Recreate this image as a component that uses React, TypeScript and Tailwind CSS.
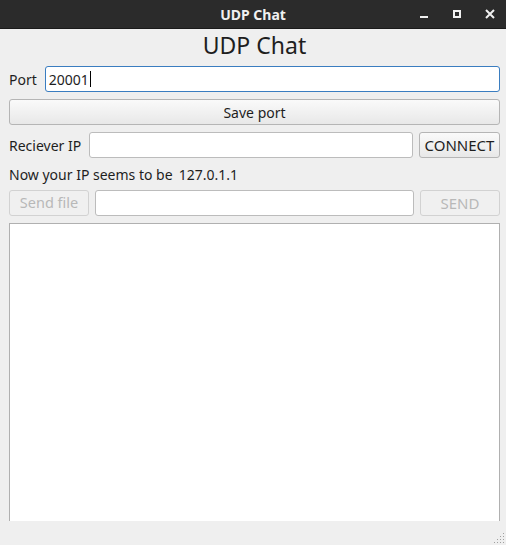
import React from "react";

const font = { fontFamily: '"Noto Sans", "Open Sans", sans-serif' };

function TitleBar() {
  return (
    <div className="relative flex h-[29px] items-center justify-center bg-[#2b2b2b] border-b border-[#1a1a1a]">
      <span className="text-[14px] font-bold text-[#f0f0f0]">UDP Chat</span>
      <div className="absolute right-0 top-0 flex h-full items-center">
        {/* minimize */}
        <div className="flex w-[33px] justify-center">
          <div className="mt-[6px] h-[2px] w-[8px] bg-[#f0f0f0]" />
        </div>
        {/* maximize */}
        <div className="flex w-[33px] justify-center">
          <div className="h-[8px] w-[8px] border-2 border-[#f0f0f0]" />
        </div>
        {/* close */}
        <div className="flex w-[33px] justify-center">
          <svg width="10" height="10" viewBox="0 0 10 10">
            <path d="M1 1L9 9M9 1L1 9" stroke="#f0f0f0" strokeWidth="2" />
          </svg>
        </div>
      </div>
    </div>
  );
}

function Button({ children, disabled, className = "" }: { children: React.ReactNode; disabled?: boolean; className?: string }) {
  return (
    <div
      className={`flex h-[26px] items-center justify-center rounded-[3px] border ${
        disabled
          ? "border-[#d2d2d2] bg-[#f0f0f0] text-[#b8b8b8]"
          : "border-[#b5b5b5] bg-gradient-to-b from-[#fafafa] to-[#e8e8e8] text-[#1e1e1e]"
      } ${className}`}
    >
      {children}
    </div>
  );
}

function Field({ children, focused, className = "" }: { children?: React.ReactNode; focused?: boolean; className?: string }) {
  return (
    <div
      className={`flex h-[26px] items-center rounded-[3px] border bg-white px-[3px] text-[14px] text-[#1e1e1e] ${
        focused ? "border-[#3a7dc0]" : "border-[#bcbcbc]"
      } ${className}`}
    >
      {children}
    </div>
  );
}

export default function App() {
  return (
    <div className="flex h-[545px] w-[506px] flex-col overflow-hidden bg-[#efefef] text-[#1e1e1e]" style={font}>
      <TitleBar />
      <div className="flex flex-1 flex-col gap-[7px] px-[9px] pt-[2px] pr-[6px]">
        <div className="text-center text-[23px] leading-[28px]">UDP Chat</div>

        <div className="flex items-center gap-[8px]">
          <span className="text-[14px]">Port</span>
          <Field focused className="flex-1">
            20001<span className="ml-[1px] h-[16px] w-[1px] bg-black" />
          </Field>
        </div>

        <Button className="text-[14px]">Save port</Button>

        <div className="flex items-center gap-[6px]">
          <span className="mr-[2px] text-[14px]">Reciever IP</span>
          <Field className="flex-1" />
          <Button className="w-[81px] text-[15px]">CONNECT</Button>
        </div>

        <div className="flex h-[18px] items-center gap-[6px] text-[14px]">
          <span>Now your IP seems to be</span>
          <span>127.0.1.1</span>
        </div>

        <div className="flex items-center gap-[6px]">
          <Button disabled className="w-[80px] text-[14.5px]">Send file</Button>
          <Field className="flex-1" />
          <Button disabled className="w-[80px] text-[15px]">SEND</Button>
        </div>

        <div className="flex-1 border border-b-0 border-[#b0b0b0] bg-white" />
      </div>
      <div className="relative h-[24px]">
        <div className="absolute bottom-[2px] right-[2px] grid grid-cols-4 gap-[2px]">
          {[0, 0, 0, 1, 0, 0, 1, 1, 0, 1, 1, 1, 1, 1, 1, 1].map((v, i) => (
            <div key={i} className={`h-[1px] w-[1px] ${v ? "bg-[#a0a0a0]" : ""}`} />
          ))}
        </div>
      </div>
    </div>
  );
}
